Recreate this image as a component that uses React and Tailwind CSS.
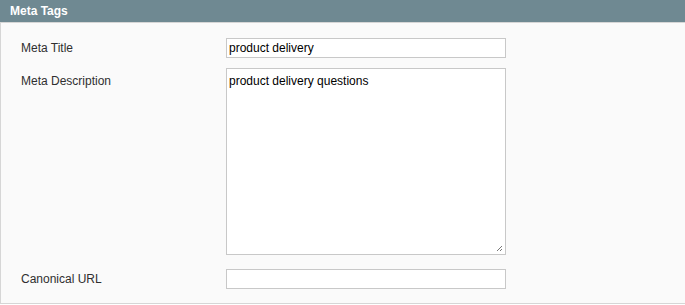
export default function App() {
  return (
    <div className="w-[685px] h-[305px] bg-white" style={{ fontFamily: '"Liberation Sans", Arial, sans-serif' }}>
      <div className="h-[22px] bg-[#6f8992] flex items-center pl-[10px]">
        <span className="text-white font-bold text-[12px] leading-none">Meta Tags</span>
      </div>
      <div className="h-[282px] bg-[#fafafa] border-l border-b border-t border-[#d6d6d6] pt-[15px] pl-[20px] flex flex-col text-[12px] text-[#2f2f2f]">
        <div className="flex items-center h-[20px]">
          <div className="w-[205px]">Meta Title</div>
          <div className="w-[280px] h-[20px] bg-white border border-[#c8c8c8] px-[2px] flex items-center text-black">product delivery</div>
        </div>
        <div className="flex mt-[10px]">
          <div className="w-[205px] pt-[4px]">Meta Description</div>
          <div className="relative w-[280px] h-[187px] bg-white border border-[#c8c8c8] px-[2px] pt-[3px] text-black">
            product delivery questions
            <svg className="absolute right-[2px] bottom-[2px]" width="7" height="7" viewBox="0 0 7 7">
              <path d="M6 1 L1 6 M6 4 L4 6" stroke="#777" strokeWidth="1" />
            </svg>
          </div>
        </div>
        <div className="flex items-center mt-[14px] h-[20px]">
          <div className="w-[205px]">Canonical URL</div>
          <div className="w-[280px] h-[20px] bg-white border border-[#c8c8c8]"></div>
        </div>
      </div>
    </div>
  );
}
